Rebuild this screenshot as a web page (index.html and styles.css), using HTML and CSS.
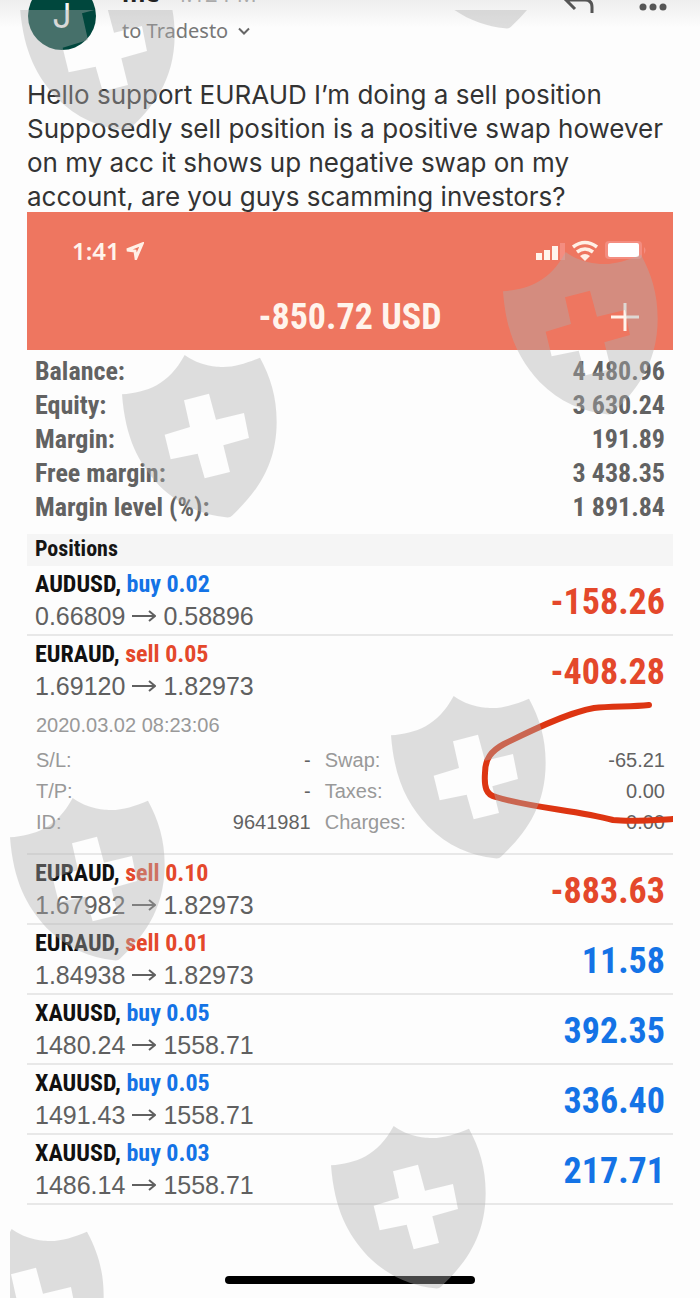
FILE: index.html
```html
<!DOCTYPE html>
<html lang="en">
<head>
<meta charset="utf-8">
<meta name="viewport" content="width=device-width, initial-scale=1">
<title>Message to Tradesto</title>
<link rel="stylesheet" href="styles.css">
</head>
<body>
<main class="page">
  <header class="mail-head">
    <div class="avatar">J</div>
    <div class="sender">
      <div class="sender-line"><strong>me</strong> <span>4:12 PM</span></div>
      <button class="recipient" type="button">to Tradesto
        <svg class="chevron" viewBox="0 0 12 8" aria-hidden="true"><path d="M1 1.500L6 6.500L11 1.500"/></svg>
      </button>
    </div>
    <div class="actions">
      <button type="button" aria-label="Reply"><svg class="icon-reply" viewBox="0 0 32 26" aria-hidden="true"><path d="M12 1L3 11L12 20M3 11H22Q29 11 29 18V24"/></svg></button>
      <button type="button" aria-label="More"><svg class="icon-more" viewBox="0 0 28 8" aria-hidden="true"><circle cx="4" cy="4" r="3.500"/><circle cx="14" cy="4" r="3.500"/><circle cx="24" cy="4" r="3.500"/></svg></button>
    </div>
  </header>

  <p class="message">Hello support EURAUD I’m doing a sell position<br>Supposedly sell position is a positive swap however on my acc it shows up negative swap on my<br>account, are you guys scamming investors?</p>

  <section class="trade">
    <header class="trade-head">
      <div class="status">
        <span class="clock">1:41
          <svg class="icon-location" viewBox="0 0 18 18" aria-hidden="true"><path d="M1 8L16 2L10 16L9 9Z"/></svg>
        </span>
        <svg class="icon-status" viewBox="0 0 112 22" aria-hidden="true">
          <path d="M0 13h6v7H0zM8 10h6v10H8zM16 6h6v14h-6z" fill="#fff4ec"/>
          <path d="M24 3h5v17h-5z" fill="#f48d80"/>
          <g fill="none" stroke="#fff0e6" stroke-width="3.500"><path d="M37 7Q49 -2 61 7"/><path d="M41 12Q49 6 57 12"/></g>
          <path d="M44 16Q49 12 54 16L49 21Z" fill="#fff0e6"/>
          <rect x="69" y="1" width="37" height="18" rx="4" fill="#f48d80"/>
          <rect x="72" y="3" width="31" height="14" rx="2" fill="#fff"/>
          <path d="M108 7q3 3 0 7z" fill="#f48d80"/>
        </svg>
      </div>
      <div class="title-row">
        <h1>-850.72 USD</h1>
        <button type="button" aria-label="New order"><svg class="icon-plus" viewBox="0 0 28 28" aria-hidden="true"><path d="M14 0V28M0 14H28"/></svg></button>
      </div>
    </header>

    <dl class="summary">
      <div><dt>Balance:</dt><dd>4 480.96</dd></div>
      <div><dt>Equity:</dt><dd>3 630.24</dd></div>
      <div><dt>Margin:</dt><dd>191.89</dd></div>
      <div><dt>Free margin:</dt><dd>3 438.35</dd></div>
      <div><dt>Margin level (%):</dt><dd>1 891.84</dd></div>
    </dl>

    <h2>Positions</h2>
    <ul class="positions">
      <li>
        <div class="row"><div><h3>AUDUSD, <span class="buy">buy 0.02</span></h3><p class="prices">0.66809 <svg class="arrow" viewBox="0 0 24 12" aria-hidden="true"><path d="M0 6H22M17 1L23 6L17 11"/></svg> 0.58896</p></div><strong class="sell">-158.26</strong></div>
      </li>
      <li>
        <div class="row"><div><h3>EURAUD, <span class="sell">sell 0.05</span></h3><p class="prices">1.69120 <svg class="arrow" viewBox="0 0 24 12" aria-hidden="true"><path d="M0 6H22M17 1L23 6L17 11"/></svg> 1.82973</p></div><strong class="sell">-408.28</strong></div>
        <div class="details">
          <time>2020.03.02 08:23:06</time>
          <dl>
            <dt>S/L:</dt><dd>-</dd><dt>Swap:</dt><dd>-65.21</dd>
            <dt>T/P:</dt><dd>-</dd><dt>Taxes:</dt><dd>0.00</dd>
            <dt>ID:</dt><dd>9641981</dd><dt>Charges:</dt><dd>0.00</dd>
          </dl>
          <svg class="marker" viewBox="0 0 192 126" aria-hidden="true"><path d="M168 6C150 8 130 7 113 9C85 14 45 34 23 45C10 52 4 60 4 74C3 88 5 96 15 98C50 109 95 111 132 121C150 123 175 121 192 120"/></svg>
        </div>
      </li>
      <li>
        <div class="row"><div><h3>EURAUD, <span class="sell">sell 0.10</span></h3><p class="prices">1.67982 <svg class="arrow" viewBox="0 0 24 12" aria-hidden="true"><path d="M0 6H22M17 1L23 6L17 11"/></svg> 1.82973</p></div><strong class="sell">-883.63</strong></div>
      </li>
      <li>
        <div class="row"><div><h3>EURAUD, <span class="sell">sell 0.01</span></h3><p class="prices">1.84938 <svg class="arrow" viewBox="0 0 24 12" aria-hidden="true"><path d="M0 6H22M17 1L23 6L17 11"/></svg> 1.82973</p></div><strong class="buy">11.58</strong></div>
      </li>
      <li>
        <div class="row"><div><h3>XAUUSD, <span class="buy">buy 0.05</span></h3><p class="prices">1480.24 <svg class="arrow" viewBox="0 0 24 12" aria-hidden="true"><path d="M0 6H22M17 1L23 6L17 11"/></svg> 1558.71</p></div><strong class="buy">392.35</strong></div>
      </li>
      <li>
        <div class="row"><div><h3>XAUUSD, <span class="buy">buy 0.05</span></h3><p class="prices">1491.43 <svg class="arrow" viewBox="0 0 24 12" aria-hidden="true"><path d="M0 6H22M17 1L23 6L17 11"/></svg> 1558.71</p></div><strong class="buy">336.40</strong></div>
      </li>
      <li>
        <div class="row"><div><h3>XAUUSD, <span class="buy">buy 0.03</span></h3><p class="prices">1486.14 <svg class="arrow" viewBox="0 0 24 12" aria-hidden="true"><path d="M0 6H22M17 1L23 6L17 11"/></svg> 1558.71</p></div><strong class="buy">217.71</strong></div>
      </li>
    </ul>
  </section>
  <div class="home-bar"></div>

  <svg class="watermark" viewBox="10 10 690 1288" preserveAspectRatio="xMinYMin slice" aria-hidden="true">
    <defs>
      <path id="shield" transform="scale(.3333)" fill-rule="evenodd" d="M0 118C75 112 140 90 188 0C235 34 285 36 304 36C340 36 375 24 414 8C445 65 464 125 464 200C464 340 395 420 330 482Q324 489 312 487C240 480 170 450 110 390C50 325 10 250 0 118ZM186 136L204 216L128 239L146 313L227 296L248 370L324 351L304 271L381 249L366 174L282 194L261 116Z"/>
    </defs>
    <use href="#shield" x="20" y="-32"/>
    <use href="#shield" x="401" y="-134"/>
    <use href="#shield" x="503" y="252"/>
    <use href="#shield" x="122" y="355"/>
    <use href="#shield" x="391" y="696"/>
    <use href="#shield" x="10" y="798"/>
    <use href="#shield" x="331" y="1126"/>
    <use href="#shield" x="-51" y="1229"/>
  </svg>
</main>
</body>
</html>
```
FILE: styles.css
```css
* { box-sizing: border-box; }
body { margin: 0; background: #fdfdfd; font-family: "Liberation Sans", Arial, sans-serif; color: #333; }
h1, h2, h3, p, dl, dd, ul { margin: 0; padding: 0; }
ul { list-style: none; }
button { padding: 0; border: 0; background: none; color: inherit; font: inherit; }
svg { display: block; }

.page { position: relative; min-height: 100vh; overflow: hidden; }

.mail-head { display: flex; align-items: flex-start; height: 78px; padding: 0 33px 0 28px; background: linear-gradient(#eeeeee, #fdfdfd 28px); }
.avatar { flex: none; width: 68px; height: 68px; margin-top: -18px; border-radius: 50%; background: #00473d; color: #f4f4f4; font: 34px/68px Inter, sans-serif; text-align: center; }
.sender { flex: 1; margin: -22px 0 0 26px; font-family: "Noto Sans", sans-serif; }
.sender-line { font-size: 24px; line-height: 30px; color: #aaa; }
.sender-line strong { color: #222; }
.sender-line span { margin-left: 8px; font-size: 22px; }
.recipient { display: flex; align-items: center; gap: 10px; margin-top: 8px; font-size: 20px; line-height: 30px; color: #777; }
.chevron { width: 12px; height: 8px; fill: none; stroke: #666; stroke-width: 2; }
.actions { display: flex; gap: 44px; }
.icon-reply { width: 32px; height: 26px; margin-top: -11px; fill: none; stroke: #555; stroke-width: 3; }
.icon-more { width: 28px; height: 8px; margin-top: -2px; fill: #555; }

.message { padding: 0 27px; font: 26px/34px Inter, sans-serif; color: #333; }

.trade { margin: -2px 27px 0; }
.trade-head { padding: 26px 20px 0 45px; height: 138px; background: #ee7660; color: #fff4ec; }
.status { display: flex; justify-content: space-between; align-items: center; height: 26px; padding-right: 5px; }
.clock { display: flex; align-items: center; gap: 6px; font: 600 24px/26px "Noto Sans", sans-serif; }
.icon-location { width: 18px; height: 18px; fill: none; stroke: #fff0e6; stroke-width: 3; }
.icon-status { width: 112px; height: 22px; }
.title-row { display: grid; grid-template-columns: 1fr auto 1fr; align-items: center; margin: 32px 0 0 -25px; height: 42px; }
.title-row h1 { grid-column: 2; }
.title-row button { justify-self: end; margin-right: 14px; }
.icon-plus { width: 28px; height: 28px; stroke: #fff4ec; stroke-width: 3; }
h1, h2, h3, .summary, .row strong { font-family: "Liberation Sans Narrow", "Arial Narrow", "Roboto Condensed", "Liberation Sans", sans-serif; font-weight: bold; }
h1 { font-size: 36px; line-height: 42px; }

.summary { padding: 4px 8px 10px; font-size: 26px; color: #626262; }
.summary div { display: flex; justify-content: space-between; line-height: 34px; }
h2 { padding: 0 8px; background: #f5f5f5; font-size: 22px; line-height: 30px; padding-bottom: 2px; color: #151515; }
.positions > li { border-bottom: 2px solid #e8e8e8; }
.row { display: flex; justify-content: space-between; align-items: center; height: 68px; padding: 0 8px; }
h3 { font-size: 24px; line-height: 32px; color: #111; }
.prices { display: flex; align-items: center; gap: 7px; font-size: 25px; line-height: 32px; color: #606060; }
.arrow { width: 24px; height: 12px; fill: none; stroke: #606060; stroke-width: 2; }
.row strong { padding-top: 4px; font-size: 36px; line-height: 42px; }
.buy { color: #1473e6; }
.sell { color: #e4482b; }

.details { position: relative; padding: 6px 8px 15px 9px; font-size: 20px; line-height: 31px; color: #999; }
.details time { display: block; line-height: 31px; margin-bottom: 4px; }
.details dl { display: grid; grid-template-columns: 60px 11fr 120px 12fr; }
.details dt:nth-of-type(even) { padding-left: 14px; }
.details dd { text-align: right; color: #626262; }
.marker { position: absolute; right: 0; bottom: 28px; width: 192px; height: 126px; fill: none; stroke: #dd3512; stroke-width: 6; stroke-linecap: round; }

.home-bar { width: 250px; height: 8px; margin: 71px auto 0; border-radius: 4px; background: #000; }
.watermark { position: absolute; inset: 10px 0 0 10px; width: calc(100% - 10px); height: calc(100% - 10px); fill: #afafaf; opacity: .4; pointer-events: none; }
```
